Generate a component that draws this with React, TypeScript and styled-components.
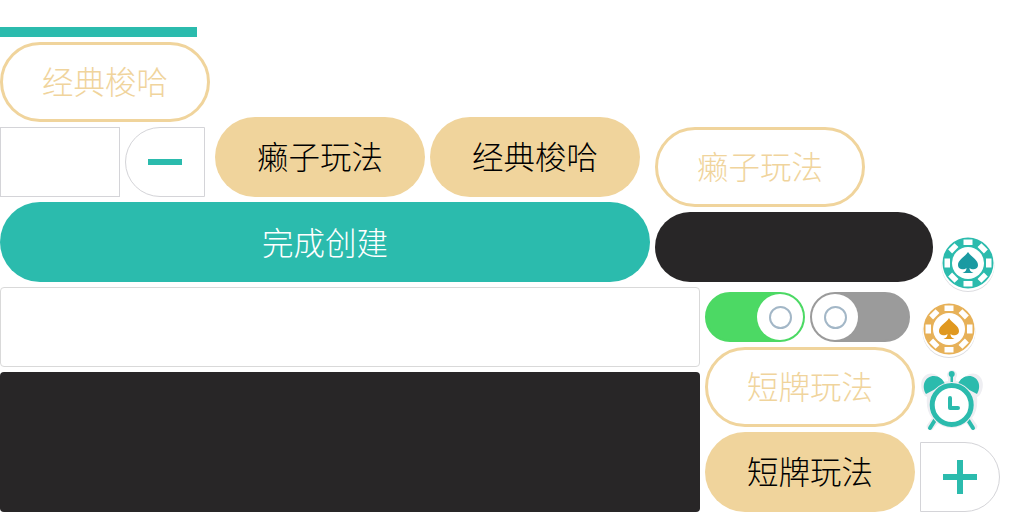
import React from "react";
import styled, { createGlobalStyle } from "styled-components";

const teal = "#2bbbad";
const sand = "#f0d49c";
const ink = "#282627";

const GlobalStyle = createGlobalStyle`
  html, body {
    margin: 0;
    padding: 0;
    background: #ffffff;
  }
  body {
    font-family: "Noto Sans CJK SC", "Noto Sans", sans-serif;
  }
`;

const Page = styled.div`
  width: 1024px;
  height: 512px;
  padding-top: 27px;
  box-sizing: border-box;
  overflow: hidden;
  display: flex;
  flex-direction: column;
  & > * {
    flex-shrink: 0;
  }
`;

const TopBar = styled.div`
  width: 197px;
  height: 10px;
  background: ${teal};
  margin-bottom: 5px;
`;

const Row = styled.div<{ $overlap?: number }>`
  display: flex;
  flex-direction: row;
  align-items: flex-start;
  gap: 5px;
  margin-top: ${({ $overlap }) => ($overlap ? `-${$overlap}px` : "0")};
  height: 80px;
  margin-bottom: 5px;
`;

const Pill = styled.div<{ $outline?: boolean; $top?: number; $left?: number }>`
  width: 210px;
  height: 80px;
  box-sizing: border-box;
  border-radius: 40px;
  margin-top: ${({ $top }) => $top ?? 0}px;
  margin-left: ${({ $left }) => $left ?? 0}px;
  padding-bottom: ${({ $outline }) => ($outline ? "2px" : "3px")};
  flex-shrink: 0;
  display: flex;
  align-items: center;
  justify-content: center;
  font-size: 31.5px;
  font-weight: 300;
  line-height: 1;
  color: ${({ $outline }) => ($outline ? sand : "#000000")};
  background: ${({ $outline }) => ($outline ? "#ffffff" : sand)};
  border: ${({ $outline }) => ($outline ? `3px solid ${sand}` : "none")};
`;

const BlankBox = styled.div`
  width: 120px;
  height: 70px;
  margin-top: 10px;
  box-sizing: border-box;
  border: 1px solid #d4d4d8;
  background: #ffffff;
`;

const StepButton = styled.div<{ $side: "left" | "right"; $top?: number }>`
  width: 80px;
  height: 70px;
  margin-top: ${({ $top }) => $top ?? 0}px;
  flex-shrink: 0;
  box-sizing: border-box;
  border: 1px solid #d4d4d8;
  border-radius: ${({ $side }) =>
    $side === "left" ? "35px 0 0 35px" : "0 35px 35px 0"};
  display: flex;
  align-items: center;
  justify-content: center;
  background: #ffffff;
`;

const MinusBar = styled.div`
  width: 34px;
  height: 6px;
  background: ${teal};
`;

const PlusMark = styled.div`
  position: relative;
  width: 34px;
  height: 34px;
  &::before,
  &::after {
    content: "";
    position: absolute;
    background: ${teal};
  }
  &::before {
    left: 0;
    right: 0;
    top: 14px;
    height: 6px;
  }
  &::after {
    top: 0;
    bottom: 0;
    left: 14px;
    width: 6px;
  }
`;

const CreateButton = styled.div`
  width: 650px;
  height: 80px;
  padding-bottom: 1px;
  box-sizing: border-box;
  flex-shrink: 0;
  border-radius: 40px;
  background: ${teal};
  color: #ffffff;
  font-size: 31.5px;
  font-weight: 300;
  line-height: 1;
  display: flex;
  align-items: center;
  justify-content: center;
`;

const DarkPill = styled.div`
  width: 278px;
  height: 70px;
  margin-top: 10px;
  flex-shrink: 0;
  border-radius: 35px;
  background: ${ink};
`;

const ChipSlot = styled.div<{ $top: number; $left: number }>`
  width: 58px;
  height: 60px;
  flex-shrink: 0;
  margin-top: ${({ $top }) => $top}px;
  margin-left: ${({ $left }) => $left}px;
`;

const Lower = styled.div`
  display: flex;
  flex-direction: row;
  gap: 5px;
  align-items: flex-start;
`;

const LeftColumn = styled.div`
  width: 700px;
  display: flex;
  flex-direction: column;
  gap: 5px;
  flex-shrink: 0;
`;

const InputBox = styled.div`
  height: 80px;
  box-sizing: border-box;
  border: 1px solid #d9d9d9;
  border-radius: 4px;
  background: #ffffff;
`;

const DarkPanel = styled.div`
  height: 140px;
  border-radius: 4px;
  background: ${ink};
`;

const MiddleColumn = styled.div`
  width: 210px;
  padding-top: 5px;
  display: flex;
  flex-direction: column;
  gap: 5px;
  flex-shrink: 0;
`;

const ToggleRow = styled.div`
  display: flex;
  gap: 5px;
`;

const Toggle = styled.div<{ $on?: boolean }>`
  width: 100px;
  height: 50px;
  box-sizing: border-box;
  border-radius: 25px;
  display: flex;
  justify-content: ${({ $on }) => ($on ? "flex-end" : "flex-start")};
  background: ${({ $on }) => ($on ? "#4cd964" : "#9b9b9b")};
  border: 2px solid ${({ $on }) => ($on ? "#4cd964" : "#9b9b9b")};
`;

const Knob = styled.div`
  width: 46px;
  height: 46px;
  box-sizing: border-box;
  border-radius: 50%;
  background: #ffffff;
  display: flex;
  align-items: center;
  justify-content: center;
`;

const KnobRing = styled.div`
  width: 23px;
  height: 23px;
  box-sizing: border-box;
  border-radius: 50%;
  border: 2px solid #a3b7c7;
`;

const RightColumn = styled.div`
  width: 80px;
  display: flex;
  flex-direction: column;
  align-items: flex-start;
  flex-shrink: 0;
`;

const AlarmSlot = styled.div`
  width: 66px;
  height: 70px;
  margin-top: 4px;
  margin-bottom: 5px;
`;

function Chip({ face, pip }: { face: string; pip: string }) {
  const notches = [0, 45, 90, 135, 180, 225, 270, 315];
  return (
    <svg width="58" height="60" viewBox="0 0 58 60">
      <circle cx="28" cy="28.500" r="26.500" fill="#dcdce0" />
      <circle cx="28" cy="27.500" r="26.500" fill="#ffffff" />
      <circle cx="28" cy="26" r="25.500" fill={face} />
      {notches.map((a) => (
        <rect
          key={a}
          x="23.500"
          y="2.500"
          width="9"
          height="5.500"
          fill="#ffffff"
          transform={`rotate(${a} 28 26)`}
        />
      ))}
      <circle cx="28" cy="26" r="16" fill="#ffffff" />
      <path
        d="M28 15C25.500 19.500 18 22.500 18 28C18 32.500 24 33.500 26.500 31C26.500 33 25.500 35 22.500 36L33.500 36C30.500 35 29.500 33 29.500 31C32 33.500 38 32.500 38 28C38 22.500 30.500 19.500 28 15Z"
        fill={pip}
      />
    </svg>
  );
}

function Alarm() {
  return (
    <svg width="66" height="70" viewBox="0 0 66 70">
      <path
        d="M32 3a5 5 0 0 1 4 8v3l6 1c3-7 9-10 14-8c8 3 9 14 3 22l-2 1c1 9-1 16-5 21l5 7c2 4-4 7-6 4l-5-6c-9 4-19 4-28 0l-5 6c-2 3-8 0-6-4l5-7c-4-5-6-12-5-21l-2-1C-1 21 0 10 8 7c5-2 11 1 14 8l6-1v-3a5 5 0 0 1 4-8Z"
        fill="#eeeef2"
      />
      <path
        d="M6 27C1 19 5 9 14 9c5 0 9 3 11 8ZM57 27C62 19 58 9 49 9c-5 0-9 3-11 8Z"
        fill={teal}
      />
      <circle cx="31.700" cy="7" r="3" fill={teal} />
      <rect x="30.500" y="7" width="2.500" height="11" fill={teal} />
      <path
        d="M15 53L10 61M48 53L53 61"
        stroke={teal}
        strokeWidth="4"
        strokeLinecap="round"
      />
      <circle cx="31.700" cy="38" r="23" fill="#eeeef2" />
      <circle cx="31.700" cy="38" r="19.500" fill="#ffffff" stroke={teal} strokeWidth="5" />
      <path
        d="M30 31V41H38"
        fill="none"
        stroke={teal}
        strokeWidth="4"
        strokeLinecap="round"
        strokeLinejoin="round"
      />
    </svg>
  );
}

export default function App() {
  return (
    <Page>
      <GlobalStyle />
      <TopBar />
      <Pill $outline>经典梭哈</Pill>
      <Row $overlap={5}>
        <BlankBox />
        <StepButton $side="left" $top={10}>
          <MinusBar />
        </StepButton>
        <Pill $left={5}>癞子玩法</Pill>
        <Pill>经典梭哈</Pill>
        <Pill $outline $top={10} $left={10}>
          癞子玩法
        </Pill>
      </Row>
      <Row>
        <CreateButton>完成创建</CreateButton>
        <DarkPill />
        <ChipSlot $top={35} $left={2}>
          <Chip face="#2bbbad" pip="#1a9aa2" />
        </ChipSlot>
      </Row>
      <Lower>
        <LeftColumn>
          <InputBox />
          <DarkPanel />
        </LeftColumn>
        <MiddleColumn>
          <ToggleRow>
            <Toggle $on>
              <Knob>
                <KnobRing />
              </Knob>
            </Toggle>
            <Toggle>
              <Knob>
                <KnobRing />
              </Knob>
            </Toggle>
          </ToggleRow>
          <Pill $outline>短牌玩法</Pill>
          <Pill>短牌玩法</Pill>
        </MiddleColumn>
        <RightColumn>
          <ChipSlot $top={16} $left={1}>
            <Chip face="#e7b158" pip="#e0981f" />
          </ChipSlot>
          <AlarmSlot>
            <Alarm />
          </AlarmSlot>
          <StepButton $side="right">
            <PlusMark />
          </StepButton>
        </RightColumn>
      </Lower>
    </Page>
  );
}
